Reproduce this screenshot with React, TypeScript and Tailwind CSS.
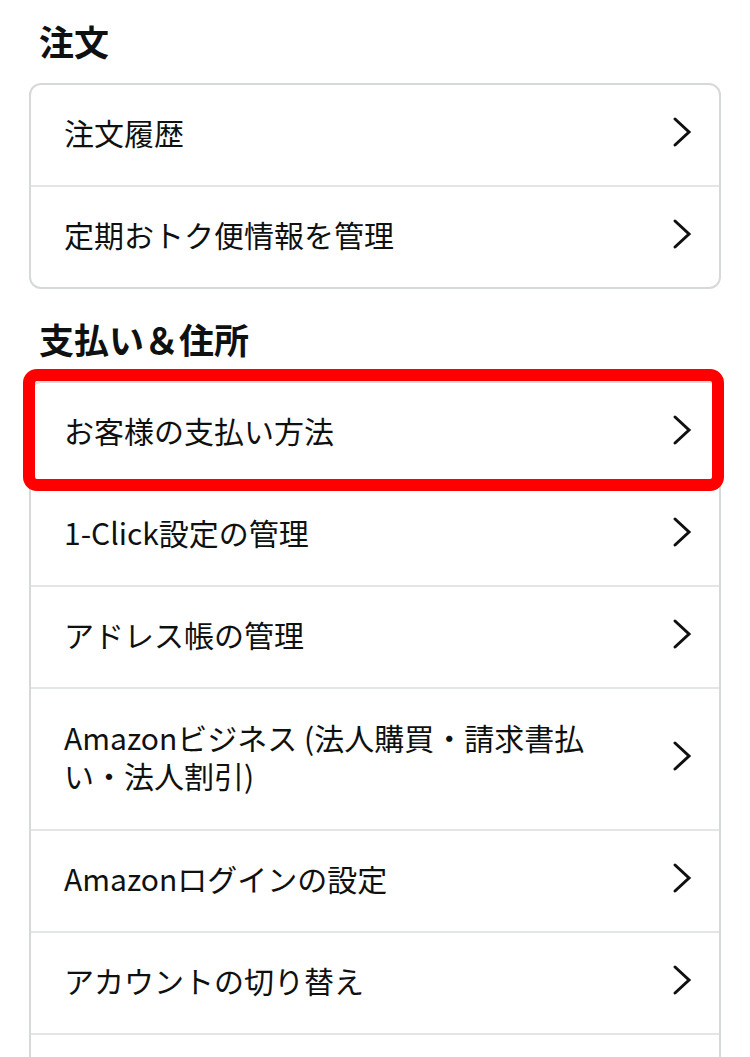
import React from 'react';

const Chevron = () => (
    <svg width="20" height="32" viewBox="0 0 20 32" className="shrink-0">
        <polyline
            points="3,3 17,16 3,29"
            fill="none"
            stroke="#0f1111"
            strokeWidth="3"
            strokeLinecap="round"
            strokeLinejoin="miter"
        />
    </svg>
);

interface RowProps {
    children?: React.ReactNode;
    tall?: boolean;
    highlight?: boolean;
    last?: boolean;
}

const Row = ({ children, tall, highlight, last }: RowProps) => {
    const height = last ? 'h-[100px]' : tall ? 'h-[142px] border-b-2 border-[#e3e6e6]' : 'h-[102px] border-b-2 border-[#e3e6e6]';
    return (
        <div className={`relative flex items-center justify-between pl-[33px] pr-[27px] pb-[6px] ${height}`}>
            <span className="text-[30px] leading-[38px] text-[#0f1111]">{children}</span>
            <Chevron />
            {highlight && (
                <div className="absolute -left-[8px] -right-[5px] -top-[14px] -bottom-[8px] border-[12px] border-[#ff0000] rounded-[14px] z-10" />
            )}
        </div>
    );
};

const Section = ({ title, children, first }: { title: string; children: React.ReactNode; first?: boolean }) => (
    <div>
        <h2 className={`ml-[10px] text-[35px] leading-[40px] font-bold text-[#0f1111] mb-[22px] ${first ? '' : 'mt-[30px]'}`}>
            {title}
        </h2>
        <div className="border-2 border-[#d5d9d9] rounded-[12px] bg-white">{children}</div>
    </div>
);

export default function App() {
    return (
        <div
            className="min-h-screen bg-white px-[29px] pt-[21px] overflow-hidden"
            style={{ fontFamily: '"Noto Sans CJK JP", "Noto Sans", sans-serif' }}
        >
            <Section title="注文" first>
                <Row>注文履歴</Row>
                <Row last>定期おトク便情報を管理</Row>
            </Section>
            <Section title="支払い＆住所">
                <Row highlight>お客様の支払い方法</Row>
                <Row>1-Click設定の管理</Row>
                <Row>アドレス帳の管理</Row>
                <Row tall>
                    Amazonビジネス (法人購買・請求書払
                    <br />
                    い・法人割引)
                </Row>
                <Row>Amazonログインの設定</Row>
                <Row>アカウントの切り替え</Row>
                <Row last />
            </Section>
        </div>
    );
}
